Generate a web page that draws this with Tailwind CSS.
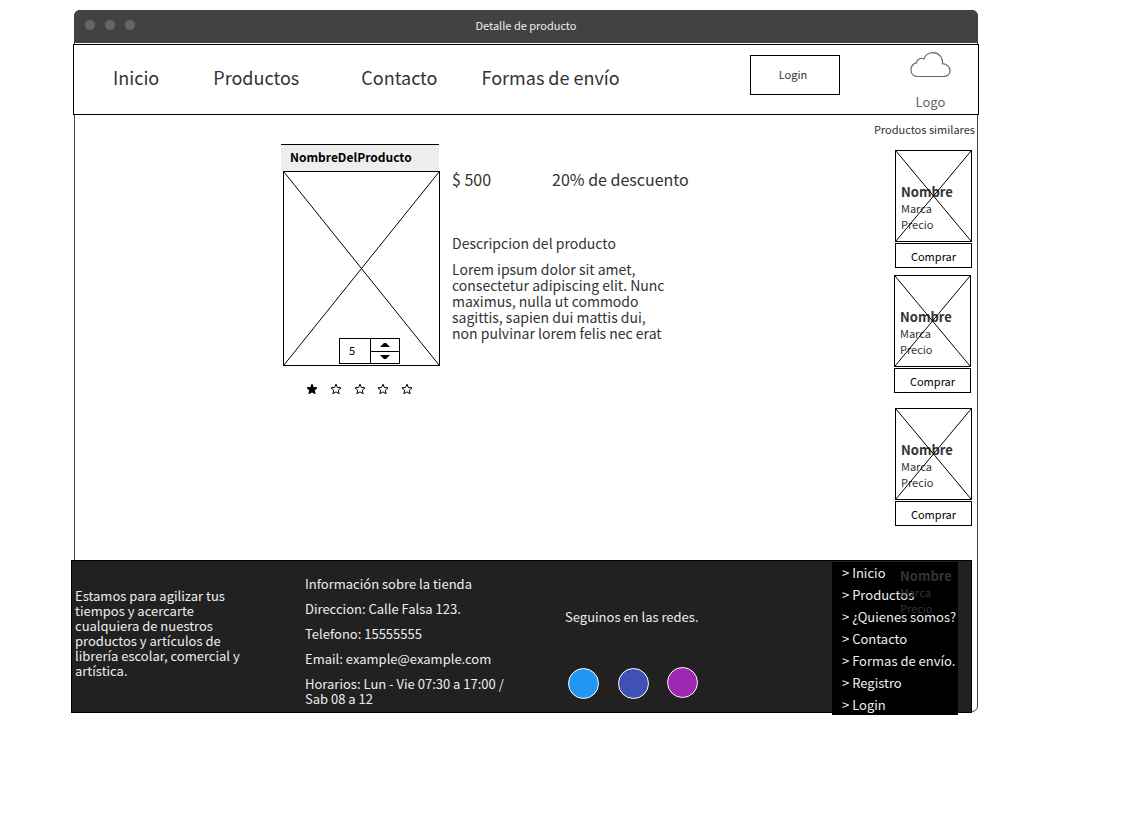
<!DOCTYPE html>
<html lang="es">
<head>
<meta charset="utf-8">
<meta name="viewport" content="width=device-width, initial-scale=1">
<title>Detalle de producto</title>
<script src="https://cdn.jsdelivr.net/npm/@tailwindcss/browser@4"></script>
</head>
<body class="flow-root min-h-screen bg-white font-['Noto_Sans_CJK_SC','Noto_Sans',sans-serif] text-[#333]">
<div class="mt-[10px] mr-[143px] ml-[74px] min-w-[860px] rounded-md border border-[#444]">
  <div class="relative -mx-px -mt-px flex h-[33px] items-center justify-center rounded-t-md bg-[#424242] pb-[3px]">
    <div class="absolute left-[11px] flex gap-[10px]">
      <span class="size-[10px] rounded-full bg-[#666]"></span>
      <span class="size-[10px] rounded-full bg-[#666]"></span>
      <span class="size-[10px] rounded-full bg-[#666]"></span>
    </div>
    <h1 class="text-[11px] leading-4 text-[#eee]">Detalle de producto</h1>
  </div>

  <header class="-mx-[2px] mt-px flex h-[71px] items-start border border-black bg-white">
    <nav class="flex pt-5 pl-[39px] text-[18px] leading-6">
      <a href="#" class="mr-[54px]">Inicio</a>
      <a href="#" class="mr-[62px]">Productos</a>
      <a href="#" class="mr-[44px]">Contacto</a>
      <a href="#">Formas de envío</a>
    </nav>
    <button type="button" class="mt-[10px] mr-[70px] ml-auto h-10 w-[90px] border border-black bg-white pr-1 pb-[2px] text-[11px]">Login</button>
    <a href="#" class="mt-[7px] mr-[27px] flex w-[41px] flex-col items-center text-[13px] leading-5 text-[#666]">
      <svg class="h-[26px] w-[41px]" viewBox="0 0 41 26" fill="none" stroke="#666" stroke-width="1.2"><path d="M8 24.500H33.500C37.500 24.500 40 22 40 18.500C40 15 37 11.800 32.500 11.600C33 5 28.500 .7 23 .7C18.500 .7 15 3.500 14 6.900C11 5.200 6.800 7.300 6.500 10.900C3 11.700 1 14.700 1 18C1 22 4 24.500 8 24.500Z"/></svg>
      <span class="mt-[14px]">Logo</span>
    </a>
  </header>

  <main class="flex justify-between">
    <section class="flex pt-[29px] pl-[205px]">
      <div class="w-[160px]">
        <h2 class="mr-px ml-px h-[27px] border-t border-black bg-[#eee] pl-[9px] text-[12px] leading-[24px] font-bold text-black">NombreDelProducto</h2>
        <div class="relative ml-[3px] h-[195px] border border-black">
          <svg class="size-full" viewBox="0 0 100 100" preserveAspectRatio="none" stroke="black"><path d="M0 0L100 100M100 0L0 100" vector-effect="non-scaling-stroke"/></svg>
          <div class="absolute right-[39px] bottom-px flex h-[26px] w-[61px] border border-black bg-white text-black">
            <input type="text" inputmode="numeric" aria-label="Cantidad" value="5" class="w-[31px] border-r border-black pb-[2px] pl-[9px] text-[11px]">
            <div class="flex flex-1 flex-col">
              <button type="button" aria-label="Aumentar" class="flex flex-1 items-center justify-center border-b border-black"><svg class="h-1 w-[10px]" viewBox="0 0 10 4"><path d="M0 4L4 0H6L10 4Z"/></svg></button>
              <button type="button" aria-label="Disminuir" class="flex flex-1 items-center justify-center"><svg class="h-1 w-[10px]" viewBox="0 0 10 4"><path d="M0 0L4 4H6L10 0Z"/></svg></button>
            </div>
          </div>
        </div>
        <div class="mt-[17px] flex justify-between pr-[27px] pl-[26px]">
          <button type="button" aria-label="1 estrella"><svg class="size-3" viewBox="0 0 12 12" fill="black" stroke="black"><path d="M6 1.200L7.400 4.500L11 4.800L8.300 7.200L9.100 10.700L6 8.900L2.900 10.700L3.700 7.200L1 4.800L4.600 4.500Z"/></svg></button>
          <button type="button" aria-label="2 estrellas"><svg class="size-3" viewBox="0 0 12 12" fill="none" stroke="black"><path d="M6 1.200L7.400 4.500L11 4.800L8.300 7.200L9.100 10.700L6 8.900L2.900 10.700L3.700 7.200L1 4.800L4.600 4.500Z"/></svg></button>
          <button type="button" aria-label="3 estrellas"><svg class="size-3" viewBox="0 0 12 12" fill="none" stroke="black"><path d="M6 1.200L7.400 4.500L11 4.800L8.300 7.200L9.100 10.700L6 8.900L2.900 10.700L3.700 7.200L1 4.800L4.600 4.500Z"/></svg></button>
          <button type="button" aria-label="4 estrellas"><svg class="size-3" viewBox="0 0 12 12" fill="none" stroke="black"><path d="M6 1.200L7.400 4.500L11 4.800L8.300 7.200L9.100 10.700L6 8.900L2.900 10.700L3.700 7.200L1 4.800L4.600 4.500Z"/></svg></button>
          <button type="button" aria-label="5 estrellas"><svg class="size-3" viewBox="0 0 12 12" fill="none" stroke="black"><path d="M6 1.200L7.400 4.500L11 4.800L8.300 7.200L9.100 10.700L6 8.900L2.900 10.700L3.700 7.200L1 4.800L4.600 4.500Z"/></svg></button>
        </div>
      </div>
      <div class="pt-[23px] pl-3">
        <div class="flex gap-[61px] text-[16px] leading-6"><p>$ 500</p><p>20% de descuento</p></div>
        <h3 class="mt-11 text-[14px] leading-4">Descripcion del producto</h3>
        <p class="mt-[10px] w-[220px] text-[14px] leading-4">Lorem ipsum dolor sit amet, consectetur adipiscing elit. Nunc maximus, nulla ut commodo sagittis, sapien dui mattis dui, non pulvinar lorem felis nec erat</p>
      </div>
    </section>

    <aside class="flex flex-col items-end pt-[6px] pr-[2px] pb-[34px]">
      <h2 class="text-[11px] leading-4">Productos similares</h2>
      <article class="mt-[13px] mr-[3px] w-[77px]">
        <div class="relative h-[92px] border border-black pt-8 pl-[5px] text-[11px] leading-4">
          <h3 class="text-[13px] leading-[17px] font-bold">Nombre</h3><p>Marca</p><p>Precio</p>
          <svg class="absolute inset-0 size-full" viewBox="0 0 100 100" preserveAspectRatio="none" stroke="black"><path d="M0 0L100 100M100 0L0 100" vector-effect="non-scaling-stroke"/></svg>
        </div>
        <button type="button" class="mt-px block h-[25px] w-full border border-black bg-white text-[11px] leading-4 text-black">Comprar</button>
      </article>
      <article class="mt-[7px] mr-1 w-[77px]">
        <div class="relative h-[92px] border border-black pt-8 pl-[5px] text-[11px] leading-4">
          <h3 class="text-[13px] leading-[17px] font-bold">Nombre</h3><p>Marca</p><p>Precio</p>
          <svg class="absolute inset-0 size-full" viewBox="0 0 100 100" preserveAspectRatio="none" stroke="black"><path d="M0 0L100 100M100 0L0 100" vector-effect="non-scaling-stroke"/></svg>
        </div>
        <button type="button" class="mt-px block h-[25px] w-full border border-black bg-white text-[11px] leading-4 text-black">Comprar</button>
      </article>
      <article class="mt-[15px] mr-[3px] w-[77px]">
        <div class="relative h-[92px] border border-black pt-8 pl-[5px] text-[11px] leading-4">
          <h3 class="text-[13px] leading-[17px] font-bold">Nombre</h3><p>Marca</p><p>Precio</p>
          <svg class="absolute inset-0 size-full" viewBox="0 0 100 100" preserveAspectRatio="none" stroke="black"><path d="M0 0L100 100M100 0L0 100" vector-effect="non-scaling-stroke"/></svg>
        </div>
        <button type="button" class="mt-px block h-[25px] w-full border border-black bg-white text-[11px] leading-4 text-black">Comprar</button>
      </article>
    </aside>
  </main>

  <footer class="mr-[5px] -mb-[2px] -ml-[4px] flex h-[153px] items-start border border-black bg-[#212121] text-[13px] leading-[15px] text-[#eee]">
    <p class="mt-[27px] ml-[3px] w-[171px]">Estamos para agilizar tus tiempos y acercarte cualquiera de nuestros productos y artículos de librería escolar, comercial y artística.</p>
    <address class="mt-[15px] ml-[59px] flex w-[210px] flex-col gap-[10px] not-italic">
      <p>Información sobre la tienda</p>
      <p>Direccion: Calle Falsa 123.</p>
      <p>Telefono: 15555555</p>
      <p>Email: example@example.com</p>
      <p>Horarios: Lun - Vie 07:30 a 17:00 / Sab 08 a 12</p>
    </address>
    <div class="mt-12 ml-[50px]">
      <p>Seguinos en las redes.</p>
      <div class="mt-[43px] ml-[3px] flex">
        <a href="#" aria-label="Twitter" class="mt-px size-[31px] rounded-full border border-white bg-[#2196f3]"></a>
        <a href="#" aria-label="Facebook" class="mt-px ml-[19px] size-[31px] rounded-full border border-white bg-[#3f51b5]"></a>
        <a href="#" aria-label="Instagram" class="ml-[18px] size-[31px] rounded-full border border-white bg-[#9c27b0]"></a>
      </div>
    </div>
    <nav class="relative mt-px mr-[13px] ml-auto flex h-[153px] w-[126px] shrink-0 flex-col overflow-hidden bg-black pl-[10px] leading-[22px] whitespace-nowrap">
      <a href="#">&gt; Inicio</a>
      <a href="#">&gt; Productos</a>
      <a href="#">&gt; ¿Quienes somos?</a>
      <a href="#">&gt; Contacto</a>
      <a href="#">&gt; Formas de envío.</a>
      <a href="#">&gt; Registro</a>
      <a href="#">&gt; Login</a>
      <div class="absolute top-[5px] left-[68px] text-[11px] leading-4 text-[#333]">
        <h3 class="text-[13px] leading-[17px] font-bold">Nombre</h3><p>Marca</p><p>Precio</p>
      </div>
    </nav>
  </footer>
</div>
</body>
</html>
